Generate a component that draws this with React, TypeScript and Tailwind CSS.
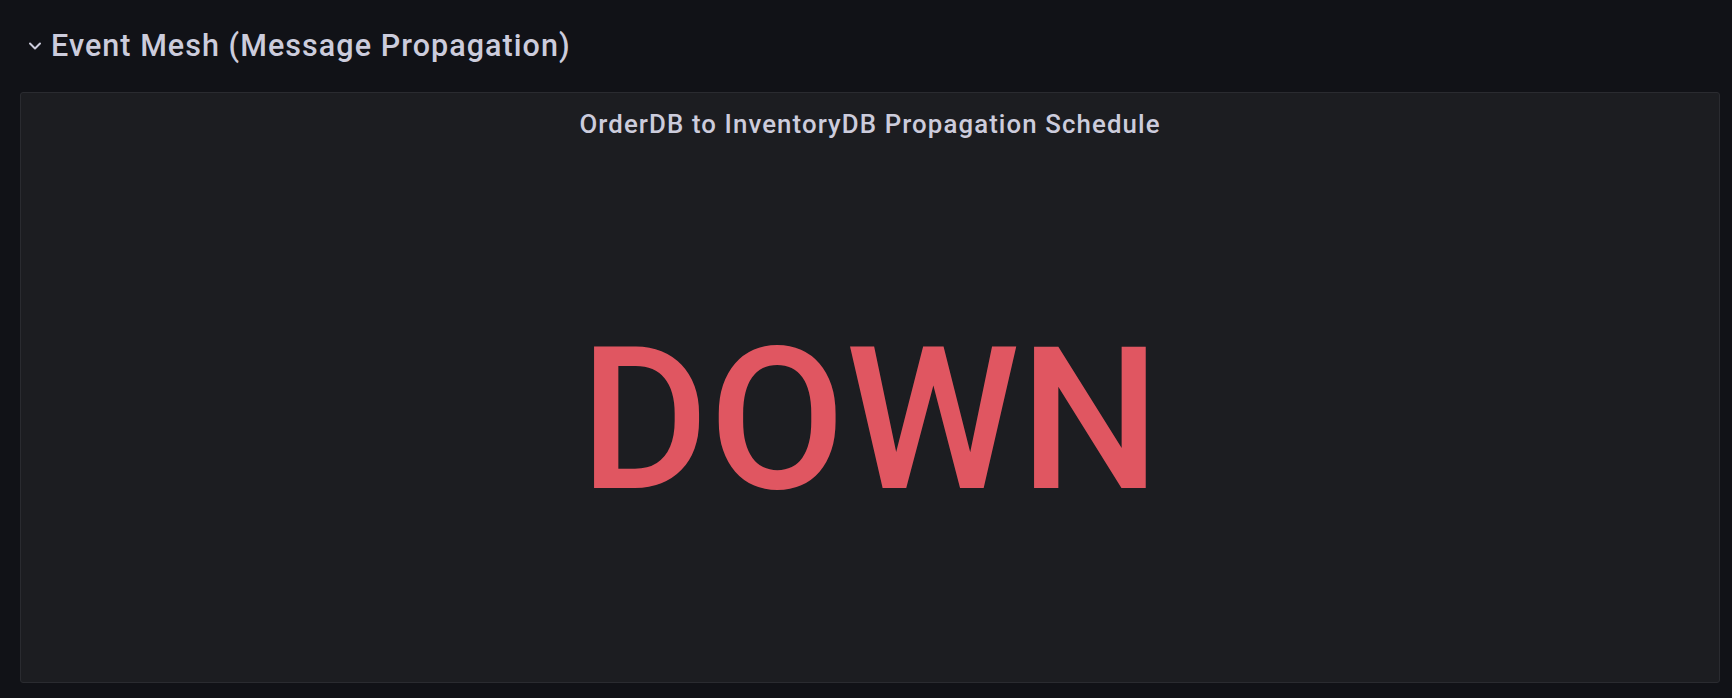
import React from 'react';

const Chevron: React.FC = () => (
  <svg width="14" height="8" viewBox="0 0 14 8" className="shrink-0">
    <polyline points="2,1.5 7,6.5 12,1.5" fill="none" stroke="#ccccdc" strokeWidth="2" strokeLinecap="round" strokeLinejoin="round" />
  </svg>
);

export default function App() {
  return (
    <div className="min-h-screen w-full bg-[#111217] font-['Roboto',sans-serif] text-[#ccccdc]">
      {/* row header */}
      <div className="h-[92px] flex items-center gap-[9px] pl-[28px]">
        <Chevron />
        <span className="text-[30.5px] font-medium leading-none tracking-[1.05px]">Event Mesh (Message Propagation)</span>
      </div>

      {/* stat panel */}
      <div className="ml-[20px] w-[1700px] h-[591px] flex flex-col bg-[#1c1d21] border border-[#2a2b30] rounded-[3px]">
        <div className="mt-[16px] h-[32px] flex items-center justify-center">
          <span className="text-[25.8px] font-medium leading-none tracking-[1.1px]">OrderDB to InventoryDB Propagation Schedule</span>
        </div>
        <div className="flex-1 flex items-center justify-center pt-[16px]">
          <span className="text-[198px] font-medium leading-none text-[#e05661]">DOWN</span>
        </div>
      </div>
    </div>
  );
}
